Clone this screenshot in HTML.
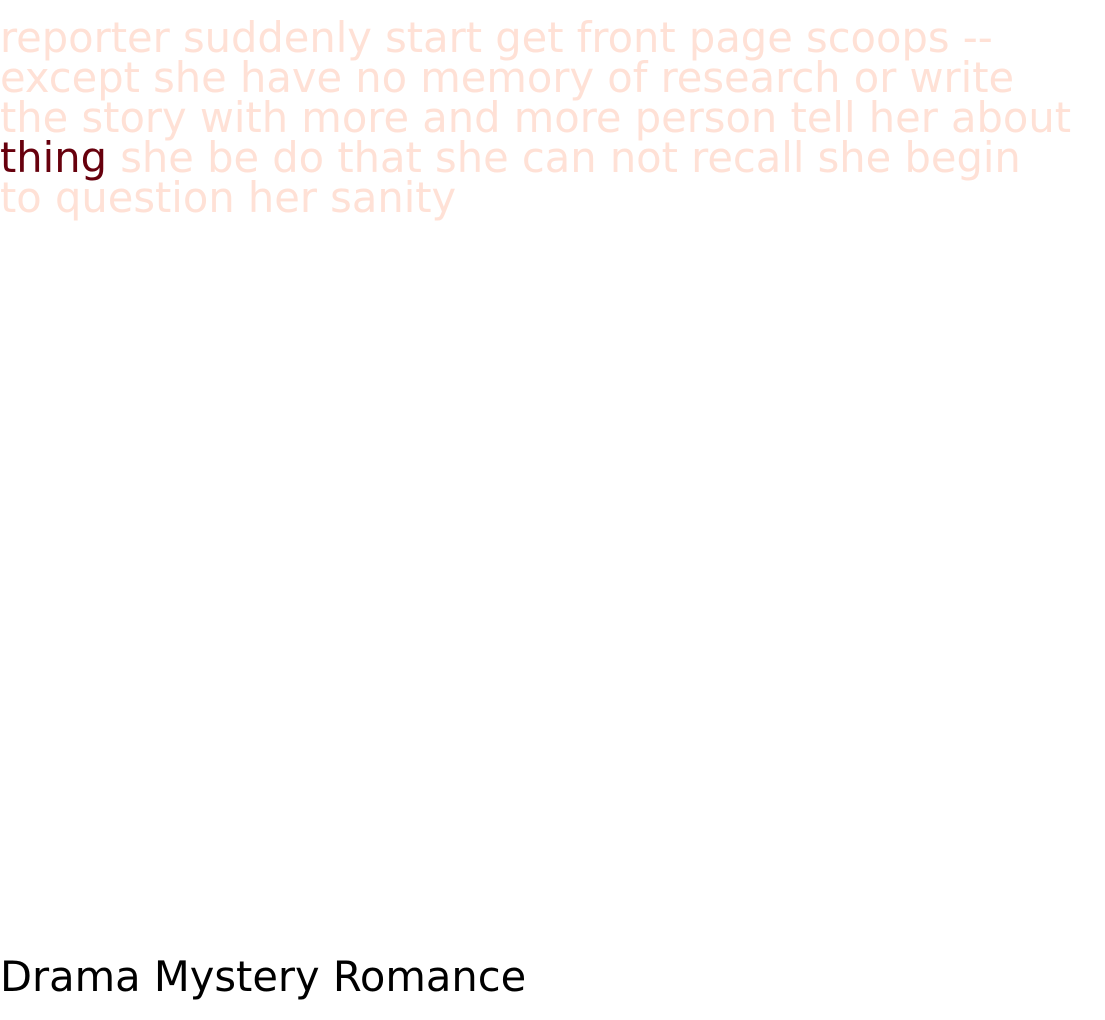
<!DOCTYPE html>
<html>
<head>
<meta charset="utf-8">
<style>
html,body{margin:0;padding:0;background:#fff;width:1105px;height:1020px;overflow:hidden}
body{font-family:"DejaVu Sans",sans-serif;font-size:41.6px;line-height:40px}
.t{position:absolute;left:0;top:18px;width:1105px;color:#ffe1d6;white-space:nowrap}
.t .d{color:#67000d}
.b{position:absolute;left:0;top:957px;color:#000;white-space:nowrap}
</style>
</head>
<body>
<div class="t">reporter suddenly start get front page scoops --<br>except she have no memory of research or write<br>the story with more and more person tell her about<br><span class="d">thing</span> she be do that she can not recall she begin<br>to question her sanity</div>
<div class="b">Drama Mystery Romance</div>
</body>
</html>
